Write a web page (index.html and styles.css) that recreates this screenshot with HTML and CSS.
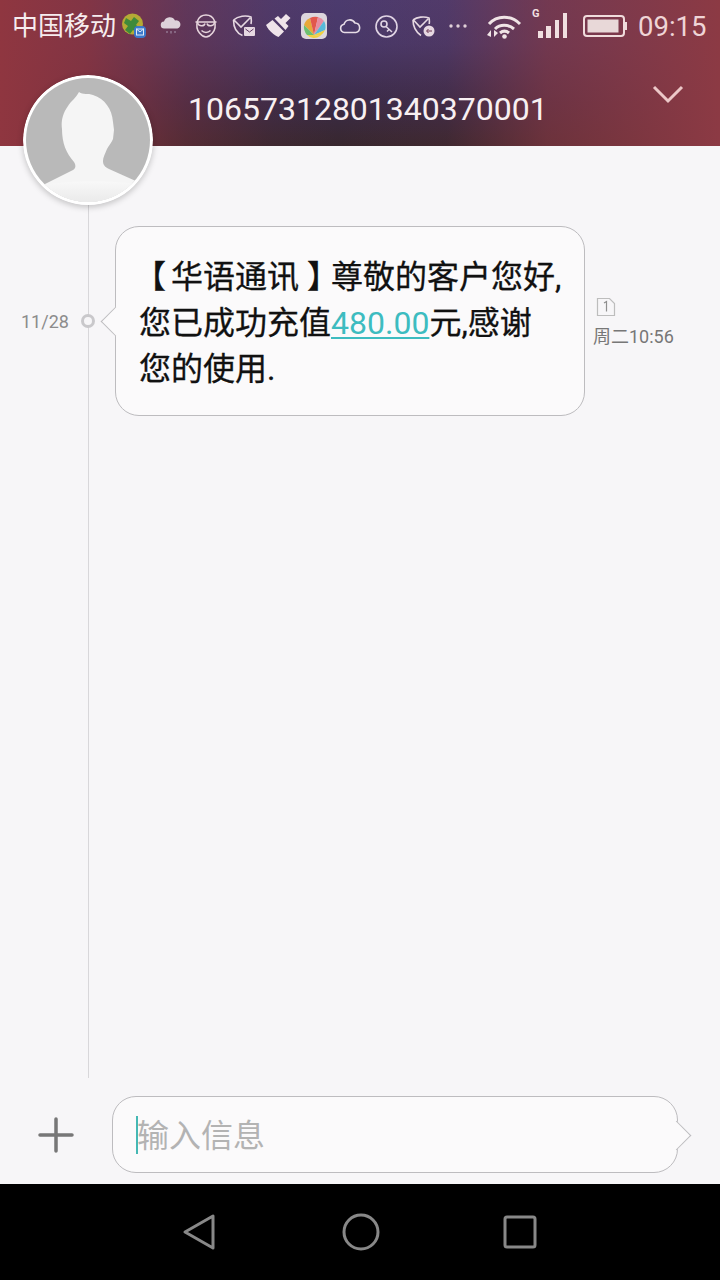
FILE: index.html
```html
<!DOCTYPE html>
<html>
<head>
  <title>Messages</title>
  <meta name="viewport" content="width=device-width, initial-scale=1.0">
  <link rel="stylesheet" href="styles.css">
</head>
<body>
  <div class="screen">
    <header class="top">
      <div class="status">
        <span class="carrier">中国移动</span>
        <svg class="ic ic-globe" width="24" height="26" viewBox="0 0 24 26">
          <circle cx="10.500" cy="11" r="10.500" fill="#b4aa35"/>
          <path d="M4 5l5 3 3-4 5 4-3 4 5 4-3 4-5-3-3 4-5-4 3-4-4-3z" fill="#3f8a3a"/>
          <rect x="12" y="13" width="12" height="12" rx="4" fill="#3a78cc"/>
          <rect x="14.500" y="16" width="7" height="6" fill="none" stroke="#dfeaf8" stroke-width="1"/>
          <path d="M14.500 16l3.500 3 3.500-3" fill="none" stroke="#dfeaf8" stroke-width="1"/>
        </svg>
        <svg class="ic ic-rain" width="22" height="20" viewBox="0 0 22 20">
          <path d="M4.500 12.500a3.500 3.500 0 0 1-.5-7A6 6 0 0 1 15 4.500a4 4 0 0 1 2.500 8z" fill="#ddd2da"/>
          <path d="M7 15v2M11 15v2.500M15 15v2" stroke="#a896ae" stroke-width="1"/>
        </svg>
        <svg class="ic ic-face" width="24" height="24" viewBox="0 0 24 24" fill="none" stroke="#e6d4dc" stroke-width="1.500">
          <path d="M3.500 7C5 3 8 1 12 1s7 2 8.500 6c1.500 5 .5 9-2 12-2 2.500-4 4-6.500 4s-4.500-1.500-6.500-4c-2.500-3-3.500-7-2-12z"/>
          <path d="M1.500 8h21M3.500 8.500c.5 4 6.500 4.500 7.500 1M13 9.500c1 3.500 7 3 7.500-1M7.500 16.500c2.500 2.500 6.500 2.500 9 0"/>
        </svg>
        <svg class="ic ic-shield" width="24" height="24" viewBox="0 0 24 24" fill="none" stroke="#e6d8e2" stroke-width="1.600">
          <path d="M1.500 6C6 2 14 1 19 3c.5 3 .5 5 0 7M1.500 6c0 7 3 13 9 15.500M2 6l7 7 9-9"/>
          <rect x="12" y="13" width="11" height="9" rx="1" fill="#e6d8e2" stroke="none"/>
          <path d="M13.500 15l4 3 4-3" stroke="#5d3560" stroke-width="1"/>
        </svg>
        <svg class="ic ic-brush" width="26" height="24" viewBox="0 0 26 24">
          <path d="M0 11l6.500-5L18 17.500 12.500 23C8 21 3 17 0 11z" fill="#efe4ea"/>
          <path d="M8.500 4.500L12 2l3 3 5-5 4.500 4-5 5 3 3-3 4z" fill="#efe4ea"/>
        </svg>
        <svg class="ic ic-app" width="26" height="26" viewBox="0 0 26 26">
          <rect width="26" height="26" rx="5" fill="#dcd6dc"/>
          <path d="M13 22L3 12A11 11 0 0 1 9 5z" fill="#e8a93a"/>
          <path d="M13 22L9 5a11 11 0 0 1 8-1z" fill="#e2574c"/>
          <path d="M13 22L17 4a11 11 0 0 1 6 4z" fill="#e88ca0"/>
          <path d="M13 22L23 8a11 11 0 0 1 1 9z" fill="#57b9d8"/>
          <path d="M13 22l11-5a12 12 0 0 1-5 6z" fill="#f0d040"/>
          <path d="M13 22L3 12a13 13 0 0 0 3 10z" fill="#6cc070"/>
          <path d="M13 22l-7 0a10 10 0 0 0 13 1z" fill="#f0d040"/>
        </svg>
        <svg class="ic ic-cloud" width="22" height="16" viewBox="0 0 22 16">
          <path d="M5.500 14.500a4.200 4.200 0 0 1-.5-8.300A6 6 0 0 1 16 5a4.800 4.800 0 0 1 .8 9.500z" fill="none" stroke="#e6dce6" stroke-width="1.600"/>
        </svg>
        <svg class="ic ic-key" width="23" height="23" viewBox="0 0 23 23" fill="none" stroke="#e0d4e4" stroke-width="1.600">
          <circle cx="11.500" cy="11.500" r="10.500"/>
          <circle cx="9" cy="9" r="3"/>
          <path d="M11 11.500l6 5.500M14 14.500l-2 2"/>
        </svg>
        <svg class="ic ic-shield2" width="23" height="21" viewBox="0 0 23 21" fill="none" stroke="#e6d8e2" stroke-width="1.600">
          <path d="M1 4C5 1 12 0 17 2c.5 2 .5 4 .2 6M1 4c0 7 3 12 8 15.500M1.500 4l6.500 7 8-8"/>
          <circle cx="17" cy="15" r="5.500" fill="#e6d8e2" stroke="none"/>
          <path d="M20 15h-5M16.500 13l-2 2 2 2" stroke="#6a3550" stroke-width="1"/>
        </svg>
        <svg class="ic ic-dots" width="18" height="4" viewBox="0 0 18 4" fill="#e0d0d8">
          <circle cx="2" cy="2" r="1.700"/><circle cx="9" cy="2" r="1.700"/><circle cx="16" cy="2" r="1.700"/>
        </svg>
        <svg class="ic ic-wifi" width="36" height="26" viewBox="0 0 36 26" fill="none" stroke="#f0e4e6" stroke-width="3">
          <path d="M3 11C11 2 25 2 34 11M9 16c5-5 13-5 19 0M14 20c3-2.500 6-2.500 9 0"/>
          <circle cx="18.500" cy="23.500" r="2.300" fill="#f0e4e6" stroke="none"/>
          <path d="M5 17v7L1 22zM8 24v-7l4 3z" fill="#f0e4e6" stroke="none"/>
        </svg>
        <div class="ic ic-signal">
          <span class="net">G</span>
          <svg width="30" height="26" viewBox="0 0 30 26" fill="#f0dfe0">
            <rect x="0" y="18" width="5" height="7"/>
            <rect x="8" y="13" width="5" height="12"/>
            <rect x="17" y="7" width="4" height="18"/>
            <rect x="25" y="0" width="4" height="25"/>
          </svg>
        </div>
        <svg class="ic ic-battery" width="44" height="22" viewBox="0 0 44 22">
          <rect x="1" y="1" width="40" height="20" rx="3" fill="none" stroke="#f0dcdc" stroke-width="2"/>
          <rect x="4.500" y="4.500" width="31" height="13" fill="#e8d8d8"/>
          <rect x="42" y="7" width="2" height="8" fill="#f0dcdc"/>
        </svg>
        <span class="clock">09:15</span>
      </div>
      <div class="title-row">
        <span class="title">10657312801340370001</span>
        <svg class="chevron" width="32" height="20" viewBox="0 0 32 20">
          <path d="M2 3l14 14L30 3" fill="none" stroke="#ecc8c8" stroke-width="3"/>
        </svg>
      </div>
    </header>

    <svg class="avatar" width="130" height="130" viewBox="0 0 130 130">
      <defs>
        <linearGradient id="chest" x1="0" y1="0" x2="0" y2="1">
          <stop offset="0" stop-color="#f8f8f8"/>
          <stop offset="1" stop-color="#e8e8e8"/>
        </linearGradient>
        <clipPath id="disc"><circle cx="65" cy="65" r="62"/></clipPath>
      </defs>
      <circle cx="65" cy="65" r="65" fill="#fff"/>
      <g clip-path="url(#disc)">
        <rect width="130" height="130" fill="#b9b9b9"/>
        <path d="M20 110l30-15c3-2 3-5 1-8C43 78 39 68 39 54c-1-6 0-15 6-23 3-5 8-8 11-14 4 3 9 1 14 3 12 4 19 14 20 27l1 8-1 9c-1 3-4 6-6 10-2 5-4 8-4 12 0 4 2 6 6 8l29 13v33H20z" fill="#f5f5f5"/>
        <path d="M20 110c30-5 70-5 100 0v20H20z" fill="url(#chest)"/>
      </g>
    </svg>

    <main class="thread">
      <div class="msg">
        <span class="msg-date">11/28</span>
        <span class="dot"></span>
        <div class="bubble"><span class="open">【</span>华语通讯<span class="close">】</span>尊敬的客户您好,<br>您已成功充值<a class="amount">480.00</a>元,感谢<br>您的使用.</div>
        <div class="msg-side">
          <svg class="sim" width="20" height="20" viewBox="0 0 20 20">
            <path d="M1.500 1.500h12l5 5v12h-17z" fill="none" stroke="#bdbdbd" stroke-width="1.200"/>
            <path d="M8 6l2.500-1.500V14.500" fill="none" stroke="#8f8f8f" stroke-width="1.200"/>
          </svg>
          <span class="msg-time">周二10:56</span>
        </div>
      </div>
    </main>

    <div class="composer">
      <svg class="plus" width="36" height="36" viewBox="0 0 36 36">
        <path d="M2 18h32M18 2v32" stroke="#777" stroke-width="3.500" stroke-linecap="round"/>
      </svg>
      <div class="input">
        <span class="caret"></span>
        <span class="hint">输入信息</span>
      </div>
    </div>

    <nav class="navbar">
      <svg width="36" height="38" viewBox="0 0 36 38">
        <path d="M3 19L31 3v32z" fill="none" stroke="#888" stroke-width="3" stroke-linejoin="round"/>
      </svg>
      <svg width="38" height="38" viewBox="0 0 38 38">
        <circle cx="19" cy="19" r="17" fill="none" stroke="#888" stroke-width="3"/>
      </svg>
      <svg width="34" height="34" viewBox="0 0 34 34">
        <rect x="2" y="2" width="30" height="30" rx="2" fill="none" stroke="#888" stroke-width="3"/>
      </svg>
    </nav>
  </div>
</body>
</html>
```

FILE: styles.css
```css
* {
  box-sizing: border-box;
}

body {
  margin: 0;
  font-family: Roboto, "Noto Sans CJK SC", sans-serif;
  color: #111;
}

.screen {
  position: relative;
  width: 720px;
  height: 1280px;
  display: flex;
  flex-direction: column;
  background-color: #f7f6f8;
  overflow: hidden;
}

/* header */
.top {
  height: 146px;
  background:
    linear-gradient(90deg, #8f3640 0, rgba(140, 52, 62, 0.85) 12%, rgba(128, 50, 62, 0.4) 26%, rgba(120, 50, 70, 0.1) 38%, rgba(120, 50, 70, 0) 47%, rgba(130, 52, 66, 0.1) 62%, rgba(136, 56, 66, 0.65) 76%, #8c3a44 100%),
    linear-gradient(180deg, #4c3b6e 0, #483868 30%, #3a2b48 70%, #38272e 100%);
}

.status {
  height: 52px;
  padding-left: 12px;
  display: flex;
  align-items: center;
  color: #f3e6e8;
}

.carrier {
  width: 105px;
  font-size: 26px;
  line-height: 36px;
  color: #f6ecee;
}

.ic {
  flex: none;
}

.ic-globe { margin-left: 5px; }
.ic-rain { margin-left: 14px; }
.ic-face { margin-left: 12px; }
.ic-shield { margin-left: 14px; }
.ic-brush { margin-left: 10px; }
.ic-app { margin-left: 9px; }
.ic-cloud { margin-left: 12px; }
.ic-key { margin-left: 14px; }
.ic-shield2 { margin-left: 14px; }
.ic-dots { margin-left: 14px; }
.ic-wifi { margin-left: 19px; }

.ic-signal {
  position: relative;
  width: 36px;
  height: 26px;
  margin-left: 10px;
  padding-left: 6px;
}

.net {
  position: absolute;
  left: 0;
  top: -5px;
  font-size: 11px;
  font-weight: 700;
  line-height: 12px;
  color: #f0dfe0;
}

.ic-battery { margin-left: 15px; }

.clock {
  margin-left: 11px;
  font-size: 27.5px;
  color: #efd4d6;
}

.title-row {
  display: flex;
  align-items: flex-start;
  padding-left: 188px;
}

.title {
  width: 464px;
  margin-top: 38px;
  font-size: 32px;
  line-height: 38px;
  color: #f8f0f2;
}

.chevron {
  margin-top: 32px;
}

/* avatar sits over the header edge */
.avatar {
  position: absolute;
  left: 23px;
  top: 75px;
  border-radius: 50%;
  box-shadow: 0 2px 6px rgba(0, 0, 0, 0.22);
}

/* message list */
.thread {
  flex: 1;
  padding-top: 80px;
  background: linear-gradient(#d8d7da, #d8d7da) no-repeat 88px 0 / 1px 100%;
}

.msg {
  display: flex;
  align-items: center;
  padding-left: 21px;
}

.msg-date {
  width: 47px;
  font-size: 18px;
  color: #8c8c8c;
  white-space: nowrap;
}

.dot {
  width: 14px;
  height: 14px;
  margin-left: 13px;
  border: 3px solid #c9c8cb;
  border-radius: 50%;
  background-color: #f7f6f8;
}

.bubble {
  position: relative;
  width: 470px;
  height: 190px;
  margin-left: 20px;
  padding: 27px 0 0 23px;
  border: 1px solid #bdbcbf;
  border-radius: 24px;
  background-color: #fbfafb;
  font-size: 32px;
  line-height: 46px;
  white-space: nowrap;
  -webkit-text-stroke: 0.3px #111;
}

.bubble::before {
  content: "";
  position: absolute;
  left: -11px;
  top: 84px;
  width: 20px;
  height: 20px;
  border-left: 1px solid #bdbcbf;
  border-bottom: 1px solid #bdbcbf;
  background-color: #fbfafb;
  transform: rotate(45deg);
}

/* the brackets sit further out in their em box than in Noto */
.open {
  margin: 0 5px 0 -5px;
}

.close {
  margin-left: 8px;
  letter-spacing: -8px;
}

.amount {
  color: #3dbcc0;
  text-decoration: underline;
  text-underline-offset: 3px;
  text-decoration-thickness: 2px;
  -webkit-text-stroke: 0;
}

.msg-side {
  margin: 4px 0 0 8px;
  display: flex;
  flex-direction: column;
  align-items: flex-start;
}

.sim {
  margin-left: 3px;
}

.msg-time {
  margin-top: 8px;
  font-size: 18px;
  line-height: 24px;
  color: #777;
  white-space: nowrap;
}

/* bottom input */
.composer {
  height: 106px;
  padding: 18px 0 0 38px;
  display: flex;
  align-items: flex-start;
}

.plus {
  margin-top: 21px;
}

.input {
  position: relative;
  width: 566px;
  height: 77px;
  margin-left: 38px;
  padding: 19px 0 0 23px;
  display: flex;
  border: 1px solid #bdbcbf;
  border-radius: 24px;
  background-color: #fbfafb;
}

.input::after {
  content: "";
  position: absolute;
  right: -10px;
  top: 28px;
  width: 20px;
  height: 20px;
  border-top: 1px solid #bdbcbf;
  border-right: 1px solid #bdbcbf;
  background-color: #fbfafb;
  transform: rotate(45deg);
}

.caret {
  width: 2px;
  height: 38px;
  margin-right: -1px;
  background-color: #45b8b4;
}

.hint {
  margin-top: 1px;
  font-size: 32px;
  line-height: 38px;
  color: #b3b3b3;
}

.navbar {
  height: 96px;
  padding: 0 183px 0 182px;
  display: flex;
  align-items: center;
  justify-content: space-between;
  background-color: #000;
}
```
